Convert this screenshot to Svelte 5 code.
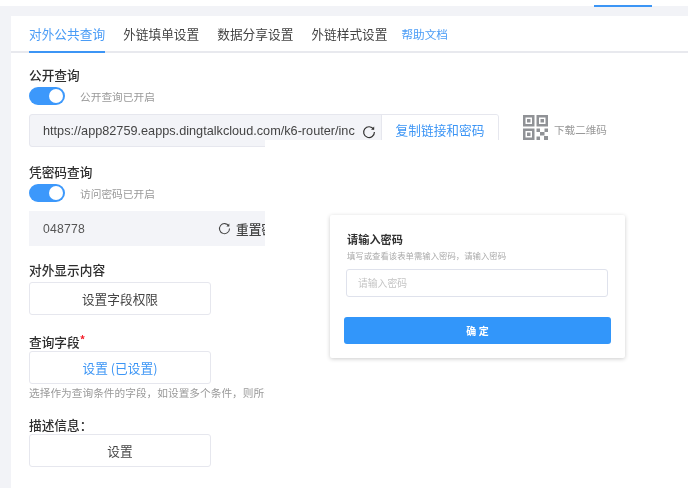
<script>
  const tabs = ['外链填单设置', '数据分享设置', '外链样式设置'];
</script>

<div class="page">
  <div class="topbar"><span class="top-indicator"></span></div>
  <div class="panel">
    <nav class="tabs">
      <span class="tab active">对外公共查询</span>
      {#each tabs as t}<span class="tab">{t}</span>{/each}
      <span class="help">帮助文档</span>
    </nav>
    <div class="content">
      <div class="label first">公开查询</div>
      <div class="switch-row">
        <span class="switch"><span class="knob"></span></span>
        <span class="switch-text">公开查询已开启</span>
      </div>
      <div class="link-row">
        <div class="link-box">
          <span class="url">https://app82759.eapps.dingtalkcloud.com/k6-router/inc</span>
          <svg class="reload" viewBox="0 0 14 14" width="14" height="14"><path d="M11.6 4.3A5.4 5.4 0 1 0 12.4 7" fill="none" stroke="#333" stroke-width="1.2"/><path d="M12.2 1.6v3.2H9z" fill="#333"/></svg>
          <span class="copy">复制链接和密码</span>
        </div>
        <svg class="qr" viewBox="0 0 25 25" width="25" height="25">
          <g fill="#909296">
            <path d="M0 0h11.5v11.5H0zM2.5 2.5v6.5h6.5V2.5z" fill-rule="evenodd"/>
            <path d="M4 4h3.5v3.5H4z"/>
            <path d="M13.5 0H25v11.5H13.5zM16 2.5v6.5h6.5V2.5z" fill-rule="evenodd"/>
            <path d="M17.5 4H21v3.5h-3.5z"/>
            <path d="M0 13.5h11.5V25H0zM2.5 16v6.5h6.5V16z" fill-rule="evenodd"/>
            <path d="M4 17.5h3.5V21H4z"/>
            <path d="M13.5 13.5h3.5v3.5h-3.5zM21.5 13.5H25v3.5h-3.5zM17 17h4.5v3.5H17zM13.5 21.5H17V25h-3.5zM21 21h4v4h-4z"/>
          </g>
        </svg>
        <span class="qr-text">下载二维码</span>
      </div>

      <div class="label pw">凭密码查询</div>
      <div class="switch-row">
        <span class="switch"><span class="knob"></span></span>
        <span class="switch-text">访问密码已开启</span>
      </div>
      <div class="pw-box">
        <span class="code">048778</span>
        <svg class="reload2" viewBox="0 0 14 14" width="13" height="13"><path d="M11.6 4.3A5.4 5.4 0 1 0 12.4 7" fill="none" stroke="#444" stroke-width="1.1"/><path d="M12.2 1.6v3.2H9z" fill="#444"/></svg>
        <span class="reset">重置密码</span>
      </div>

      <div class="label display">对外显示内容</div>
      <button class="btn">设置字段权限</button>

      <div class="label fields">查询字段<span class="req">*</span></div>
      <button class="btn blue">设置 (已设置)</button>
      <div class="hint">选择作为查询条件的字段，如设置多个条件，则所有条件都需要满足</div>

      <div class="label desc">描述信息：</div>
      <button class="btn">设置</button>
    </div>
  </div>

  <div class="overlay">
    <div class="dialog">
      <div class="d-title">请输入密码</div>
      <div class="d-sub">填写或查看该表单需输入密码，请输入密码</div>
      <div class="d-input">请输入密码</div>
      <div class="d-btn">确 定</div>
    </div>
  </div>
</div>

<style>
  :global(body) {
    margin: 0;
    background: #fff;
    overflow: hidden;
  }
  .page {
    position: relative;
    width: 688px;
    height: 488px;
    overflow: hidden;
    background: #f2f3f7;
    font-family: "Noto Sans CJK SC", "Liberation Sans", sans-serif;
    color: #333;
    font-size: 12.7px;
    filter: blur(0.3px);
  }
  .topbar {
    height: 6px;
    background: #fff;
    position: relative;
    padding-left: 594px;
  }
  .top-indicator {
    display: block;
    width: 58px;
    height: 2px;
    position: absolute;
    top: 5px;
    background: #3c95f5;
  }
  .panel {
    margin: 10px 0 0 11px;
    background: #fff;
    height: 472px;
  }
  .tabs {
    height: 35px;
    box-sizing: content-box;
    display: flex;
    gap: 18px;
    padding-left: 18px;
    border-bottom: 2px solid #e8e9ee;
    align-items: stretch;
  }
  .tab {
    line-height: 35px;
    height: 36px;
    box-sizing: border-box;
    color: #444;
    margin-bottom: -2px;
    white-space: nowrap;
  }
  .tab.active {
    color: #4a9cf6;
    height: 37px;
    border-bottom: 2px solid #3c95f5;
  }
  .help {
    color: #4a9cf6;
    font-size: 11.6px;
    line-height: 36px;
    margin-left: -4px;
  }
  .content {
    padding-left: 18px;
  }
  .label {
    height: 16px;
    line-height: 16px;
    color: #2e2e2e;
    font-weight: 500;
    white-space: nowrap;
  }
  .label.first { margin-top: 14px; }
  .switch-row {
    display: flex;
    align-items: center;
    height: 18px;
    margin-top: 4px;
    gap: 15px;
  }
  .switch {
    width: 36px;
    height: 18px;
    border-radius: 9px;
    background: #3c98fb;
    display: flex;
    justify-content: flex-end;
    align-items: center;
    padding-right: 2px;
    box-sizing: border-box;
  }
  .knob {
    width: 14px;
    height: 14px;
    border-radius: 50%;
    background: #fff;
  }
  .switch-text {
    color: #999;
    font-size: 10.7px;
  }
  .link-row {
    display: flex;
    align-items: center;
    margin-top: 9px;
    height: 33px;
  }
  .link-box {
    width: 470px;
    height: 33px;
    box-sizing: border-box;
    flex: none;
    display: flex;
    align-items: center;
    background: #f3f4f8;
    border: 1px solid #e6e7ee;
    border-radius: 3px;
    padding-left: 13px;
    overflow: hidden;
  }
  .url {
    width: 316px;
    flex: none;
    font-family: "Liberation Sans", sans-serif;
    font-size: 12.7px;
    color: #444;
    white-space: nowrap;
    overflow: hidden;
  }
  .reload { flex: none; margin: 2px 0 0 3px; }
  .copy {
    margin-left: 5px;
    flex: 1;
    align-self: stretch;
    background: #fff;
    border-left: 1px solid #e6e7ee;
    color: #3c95f5;
    text-align: center;
    line-height: 29px;
    white-space: nowrap;
  }
  .qr { flex: none; margin: 1px 0 0 24px; align-self: flex-start; }
  .qr-text {
    margin: -3px 0 0 6px;
    color: #999;
    font-size: 10.6px;
    white-space: nowrap;
  }
  .label.pw { margin-top: 17px; }
  .pw-box {
    margin-top: 9px;
    height: 35px;
    width: 470px;
    display: flex;
    align-items: center;
    background: #f3f4f8;
    padding-left: 14px;
    box-sizing: border-box;
  }
  .code {
    width: 175px;
    font-family: "Liberation Sans", sans-serif;
    font-size: 12.2px;
    color: #555;
    letter-spacing: 0.2px;
  }
  .reload2 { flex: none; }
  .reset { margin-left: 5px; color: #444; font-weight: 500; white-space: nowrap; }
  .label.display { margin-top: 16px; }
  .btn {
    display: block;
    margin: 4px 0 0;
    width: 182px;
    height: 33px;
    padding: 0;
    background: #fff;
    border: 1px solid #e6e7ee;
    border-radius: 3px;
    color: #444;
    font: inherit;
    text-align: center;
  }
  .btn.blue { color: #3c95f5; }
  .label.fields { margin-top: 16px; }
  .label.fields + .btn { margin-top: 4px; }
  .req {
    color: #f5222d;
    vertical-align: 3px;
    font-size: 11px;
    font-weight: 700;
  }
  .hint {
    margin-top: 1px;
    height: 15px;
    line-height: 15px;
    font-size: 10.7px;
    color: #999;
    white-space: nowrap;
  }
  .label.desc { margin-top: 17px; }
  .label.desc + .btn { margin-top: 1px; }
  .overlay {
    position: absolute;
    left: 265px;
    top: 140px;
    right: 0;
    bottom: 0;
    background: #fff;
  }
  .overlay .dialog {
    position: absolute;
    left: 65px;
    top: 75px;
  }
  .dialog {
    width: 295px;
    height: 143px;
    box-sizing: border-box;
    padding: 17px 14px 0 14px;
    background: #fff;
    border-radius: 2px;
    box-shadow: 0 1px 4px rgba(0, 0, 0, 0.2);
  }
  .d-title {
    padding-left: 3px;
    font-size: 11.2px;
    font-weight: 700;
    color: #333;
    line-height: 15px;
  }
  .d-sub {
    padding-left: 3px;
    font-size: 8.4px;
    color: #aaa;
    line-height: 12px;
    margin-top: 2px;
    white-space: nowrap;
  }
  .d-input {
    width: 262px;
    height: 28px;
    box-sizing: border-box;
    margin: 8px 0 0 2px;
    border: 1px solid #dfe2ec;
    border-radius: 3px;
    padding-left: 11px;
    line-height: 26px;
    font-size: 9.8px;
    color: #c4c4c4;
  }
  .d-btn {
    width: 267px;
    height: 27px;
    margin-top: 20px;
    background: #3296fa;
    border-radius: 3px;
    color: #fff;
    text-align: center;
    line-height: 27px;
    font-size: 10px;
    font-weight: 700;
  }
</style>
